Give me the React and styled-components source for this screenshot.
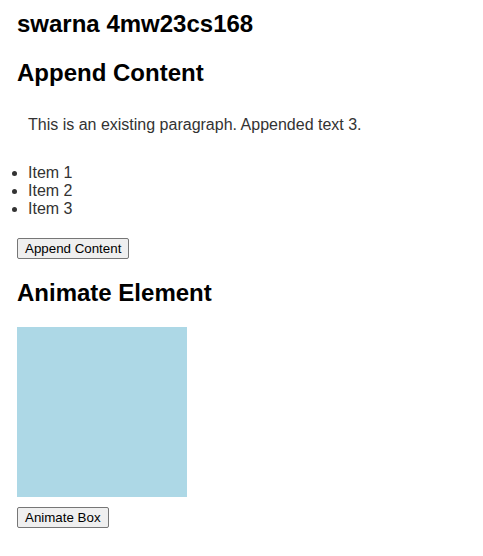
import React from "react";
import styled, { createGlobalStyle } from "styled-components";

const GlobalStyle = createGlobalStyle`
  body {
    margin: 0;
    background: #fff;
    font-family: "Liberation Sans", Arial, sans-serif;
  }
`;

const Page = styled.div`
  padding-top: 10px;
`;

const Heading = styled.h2`
  font-size: 24px;
  font-weight: bold;
  line-height: normal;
  color: #000;
  margin: ${props => (props.$first ? "0 17px 21px" : "20px 17px")};
`;

const Paragraph = styled.p`
  margin: 19px 17px 20px;
  padding: 9px 11px 10px;
  font-size: 16px;
  line-height: normal;
  color: #333;
`;

const ItemList = styled.ul`
  margin: 20px 0;
  padding-left: 28px;
  font-size: 16px;
  line-height: normal;
  color: #333;
`;

const ButtonRow = styled.div`
  display: flex;
  margin: ${props => (props.$tight ? "10px 17px" : "20px 17px")};
`;

const Button = styled.button`
  font-family: "Liberation Sans", Arial, sans-serif;
  font-size: 13.33px;
  line-height: normal;
  color: #000;
  background: #efefef;
  border: 1px solid #767676;
  border-radius: 2px;
  padding: 2px 7px;
`;

const Box = styled.div`
  width: 170px;
  height: 170px;
  margin: 0 17px;
  background: lightblue;
`;

const App = () => {
  const items = ["Item 1", "Item 2", "Item 3"];
  return (
    <Page>
      <GlobalStyle />
      <Heading $first>swarna 4mw23cs168</Heading>
      <Heading>Append Content</Heading>
      <Paragraph>This is an existing paragraph. Appended text 3.</Paragraph>
      <ItemList>
        {items.map(item => (
          <li key={item}>{item}</li>
        ))}
      </ItemList>
      <ButtonRow>
        <Button>Append Content</Button>
      </ButtonRow>
      <Heading>Animate Element</Heading>
      <Box />
      <ButtonRow $tight>
        <Button>Animate Box</Button>
      </ButtonRow>
    </Page>
  );
};

export default App;
